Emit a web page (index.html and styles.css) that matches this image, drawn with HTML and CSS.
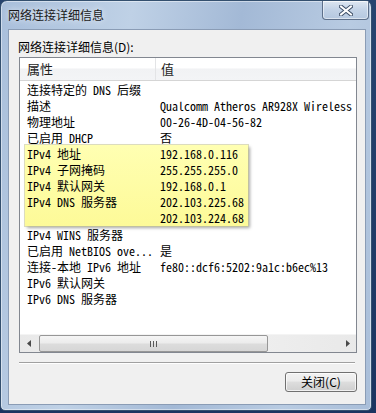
FILE: index.html
```html
<!DOCTYPE html>
<html lang="zh-CN">
<head>
    <meta charset="UTF-8">
    <meta name="viewport" content="width=device-width, initial-scale=1.0">
    <title>网络连接详细信息</title>
    <link rel="stylesheet" href="styles.css">
</head>
<body>

    <div class="window">
        <div class="titlebar">
            <span class="title">网络连接详细信息</span>
            <div class="close-x">
                <svg width="14" height="11" viewBox="0 0 14 11">
                    <path d="M2 1.5 L12 9.5 M12 1.5 L2 9.5" stroke="#3c4d66" stroke-width="4" stroke-linecap="square"/>
                    <path d="M2 1.5 L12 9.5 M12 1.5 L2 9.5" stroke="#ffffff" stroke-width="2" stroke-linecap="square"/>
                </svg>
            </div>
        </div>

        <div class="client">
            <div class="label">网络连接详细信息(D):</div>

            <div class="listbox">
                <div class="header">
                    <div class="head-prop">属性</div>
                    <div class="head-val">值</div>
                </div>

                <div class="rows">
                    <div class="row"><span>连接特定的 DNS 后缀</span><span></span></div>
                    <div class="row"><span>描述</span><span>Qualcomm Atheros AR928X Wireless</span></div>
                    <div class="row"><span>物理地址</span><span>00-26-4D-04-56-82</span></div>
                    <div class="row"><span>已启用 DHCP</span><span>否</span></div>

                    <div class="hl">
                        <div class="row"><span>IPv4 地址</span><span>192.168.0.116</span></div>
                        <div class="row"><span>IPv4 子网掩码</span><span>255.255.255.0</span></div>
                        <div class="row"><span>IPv4 默认网关</span><span>192.168.0.1</span></div>
                        <div class="row"><span>IPv4 DNS 服务器</span><span>202.103.225.68</span></div>
                        <div class="row"><span></span><span>202.103.224.68</span></div>
                    </div>

                    <div class="row"><span>IPv4 WINS 服务器</span><span></span></div>
                    <div class="row"><span>已启用 NetBIOS ove...</span><span>是</span></div>
                    <div class="row"><span>连接-本地 IPv6 地址</span><span>fe80::dcf6:5202:9a1c:b6ec%13</span></div>
                    <div class="row"><span>IPv6 默认网关</span><span></span></div>
                    <div class="row"><span>IPv6 DNS 服务器</span><span></span></div>
                </div>

                <div class="hscroll">
                    <div class="arrow"><svg width="4" height="7" viewBox="0 0 4 7"><path d="M4 0 L0 3.5 L4 7 Z" fill="#4a4a4a"/></svg></div>
                    <div class="track">
                        <div class="thumb"><span class="grip"></span></div>
                    </div>
                    <div class="arrow"><svg width="4" height="7" viewBox="0 0 4 7"><path d="M0 0 L4 3.5 L0 7 Z" fill="#4a4a4a"/></svg></div>
                </div>
            </div>

            <div class="sep"></div>

            <div class="buttons">
                <button class="btn">关闭(C)</button>
            </div>
        </div>
    </div>

</body>
</html>
```

FILE: styles.css
```css
body{
    margin: 0;
    width: 376px;
    height: 413px;
    overflow: hidden;
    background: linear-gradient(180deg, #27446f, #1b3460);
    font-family: "Noto Sans CJK SC", sans-serif;
    font-size: 12px;
}

.window{
    width: 370px;
    height: 409px;
    border: 1px solid #34506f;
    border-radius: 7px 7px 5px 5px;
    background: linear-gradient(100deg, #a9bfdb 0%, #bfd1e6 30%, #a3b9d6 55%, #b8cbe2 80%, #a9bed9 100%);
    box-shadow: inset 0 0 0 1px rgba(255,255,255,.45);
    display: flex;
    flex-direction: column;
}

.titlebar{
    height: 28px;
    display: flex;
    justify-content: space-between;
    align-items: flex-start;
}

.title{
    margin: 6px 0 0 7px;
    line-height: 16px;
    color: #1a1a1a;
    text-shadow: 0 0 6px rgba(255,255,255,.9);
}

.close-x{
    width: 45px;
    height: 18px;
    margin-right: 2px;
    border: 1px solid #5d6f8a;
    border-top: none;
    border-radius: 0 0 4px 4px;
    background: linear-gradient(180deg, rgba(255,255,255,.55), rgba(210,222,238,.45) 50%, rgba(180,198,222,.45));
    box-shadow: inset 0 0 0 1px rgba(255,255,255,.5);
    display: flex;
    align-items: center;
    justify-content: center;
}

.client{
    margin: 0 5px 0 7px;
    height: 374px;
    border: 1px solid #8a9cb5;
    background: #f0f0f0;
    display: flex;
    flex-direction: column;
}

.label{
    padding: 9px 0 0 9px;
    line-height: 16px;
    color: #000;
}

.listbox{
    margin: 2px 0 0 10px;
    width: 336px;
    height: 294px;
    border: 1px solid #828790;
    background: #fff;
    display: flex;
    flex-direction: column;
    overflow: hidden;
}

.header{
    height: 22px;
    border-bottom: 1px solid #d5d5d5;
    background: linear-gradient(180deg, #ffffff 0%, #ffffff 45%, #f1f2f4 50%, #f3f4f6 100%);
    display: flex;
    font-size: 13px;
    line-height: 22px;
    color: #1e1e1e;
}

.head-prop{
    width: 128px;
    padding-left: 7px;
    border-right: 1px solid #e3e4e6;
}

.head-val{
    padding-left: 5px;
}

.rows{
    flex: 1;
    padding-top: 1px;
    font-family: "Noto Sans Mono CJK SC", "Noto Sans CJK SC", monospace;
    font-size: 12px;
}

.row{
    height: 16px;
    line-height: 16px;
    padding-left: 7px;
    display: grid;
    grid-template-columns: 133px 1fr;
    white-space: nowrap;
    overflow: hidden;
    color: #000;
}

.hl{
    margin: -1px 0 1px 5px;
    width: 223px;
    background: linear-gradient(180deg, #ffffb2, #fdfa98);
    box-shadow: 0 0 0 1px rgba(200,200,150,.6), 2px 2px 3px rgba(0,0,0,.35);
}

.hl .row{
    padding-left: 2px;
}

.hl .row:first-child{
    padding-top: 1px;
}

.hscroll{
    height: 17px;
    display: flex;
    background: linear-gradient(90deg, #e9e9e9, #f2f2f2 50%, #e9e9e9);
    border-top: 1px solid #f4f4f4;
}

.arrow{
    width: 17px;
    display: flex;
    align-items: center;
    justify-content: center;
}

.track{
    flex: 1;
    padding: 0 71px 0 2px;
}

.thumb{
    height: 15px;
    border: 1px solid #979797;
    border-radius: 2px;
    background: linear-gradient(180deg, #f5f5f5 0%, #ececec 45%, #dcdcdc 55%, #d6d6d6 100%);
    display: flex;
    align-items: center;
    justify-content: center;
}

.grip{
    width: 7px;
    height: 6px;
    background: repeating-linear-gradient(90deg, #5a5a5a 0 1px, transparent 1px 3px);
}

.sep{
    margin: 9px 0 0 10px;
    width: 336px;
    border-top: 1px solid #a0a0a0;
    border-bottom: 1px solid #ffffff;
}

.buttons{
    display: flex;
    justify-content: flex-end;
    padding: 8px 8px 0 0;
}

.btn{
    width: 72px;
    height: 20px;
    padding: 0;
    border: 1px solid #707070;
    border-radius: 3px;
    background: linear-gradient(180deg, #f2f2f2 0%, #ebebeb 45%, #dddddd 50%, #cfcfcf 100%);
    box-shadow: inset 0 0 0 1px rgba(255,255,255,.7);
    font-family: "Noto Sans CJK SC", sans-serif;
    font-size: 12px;
    line-height: 18px;
    color: #000;
}
```
